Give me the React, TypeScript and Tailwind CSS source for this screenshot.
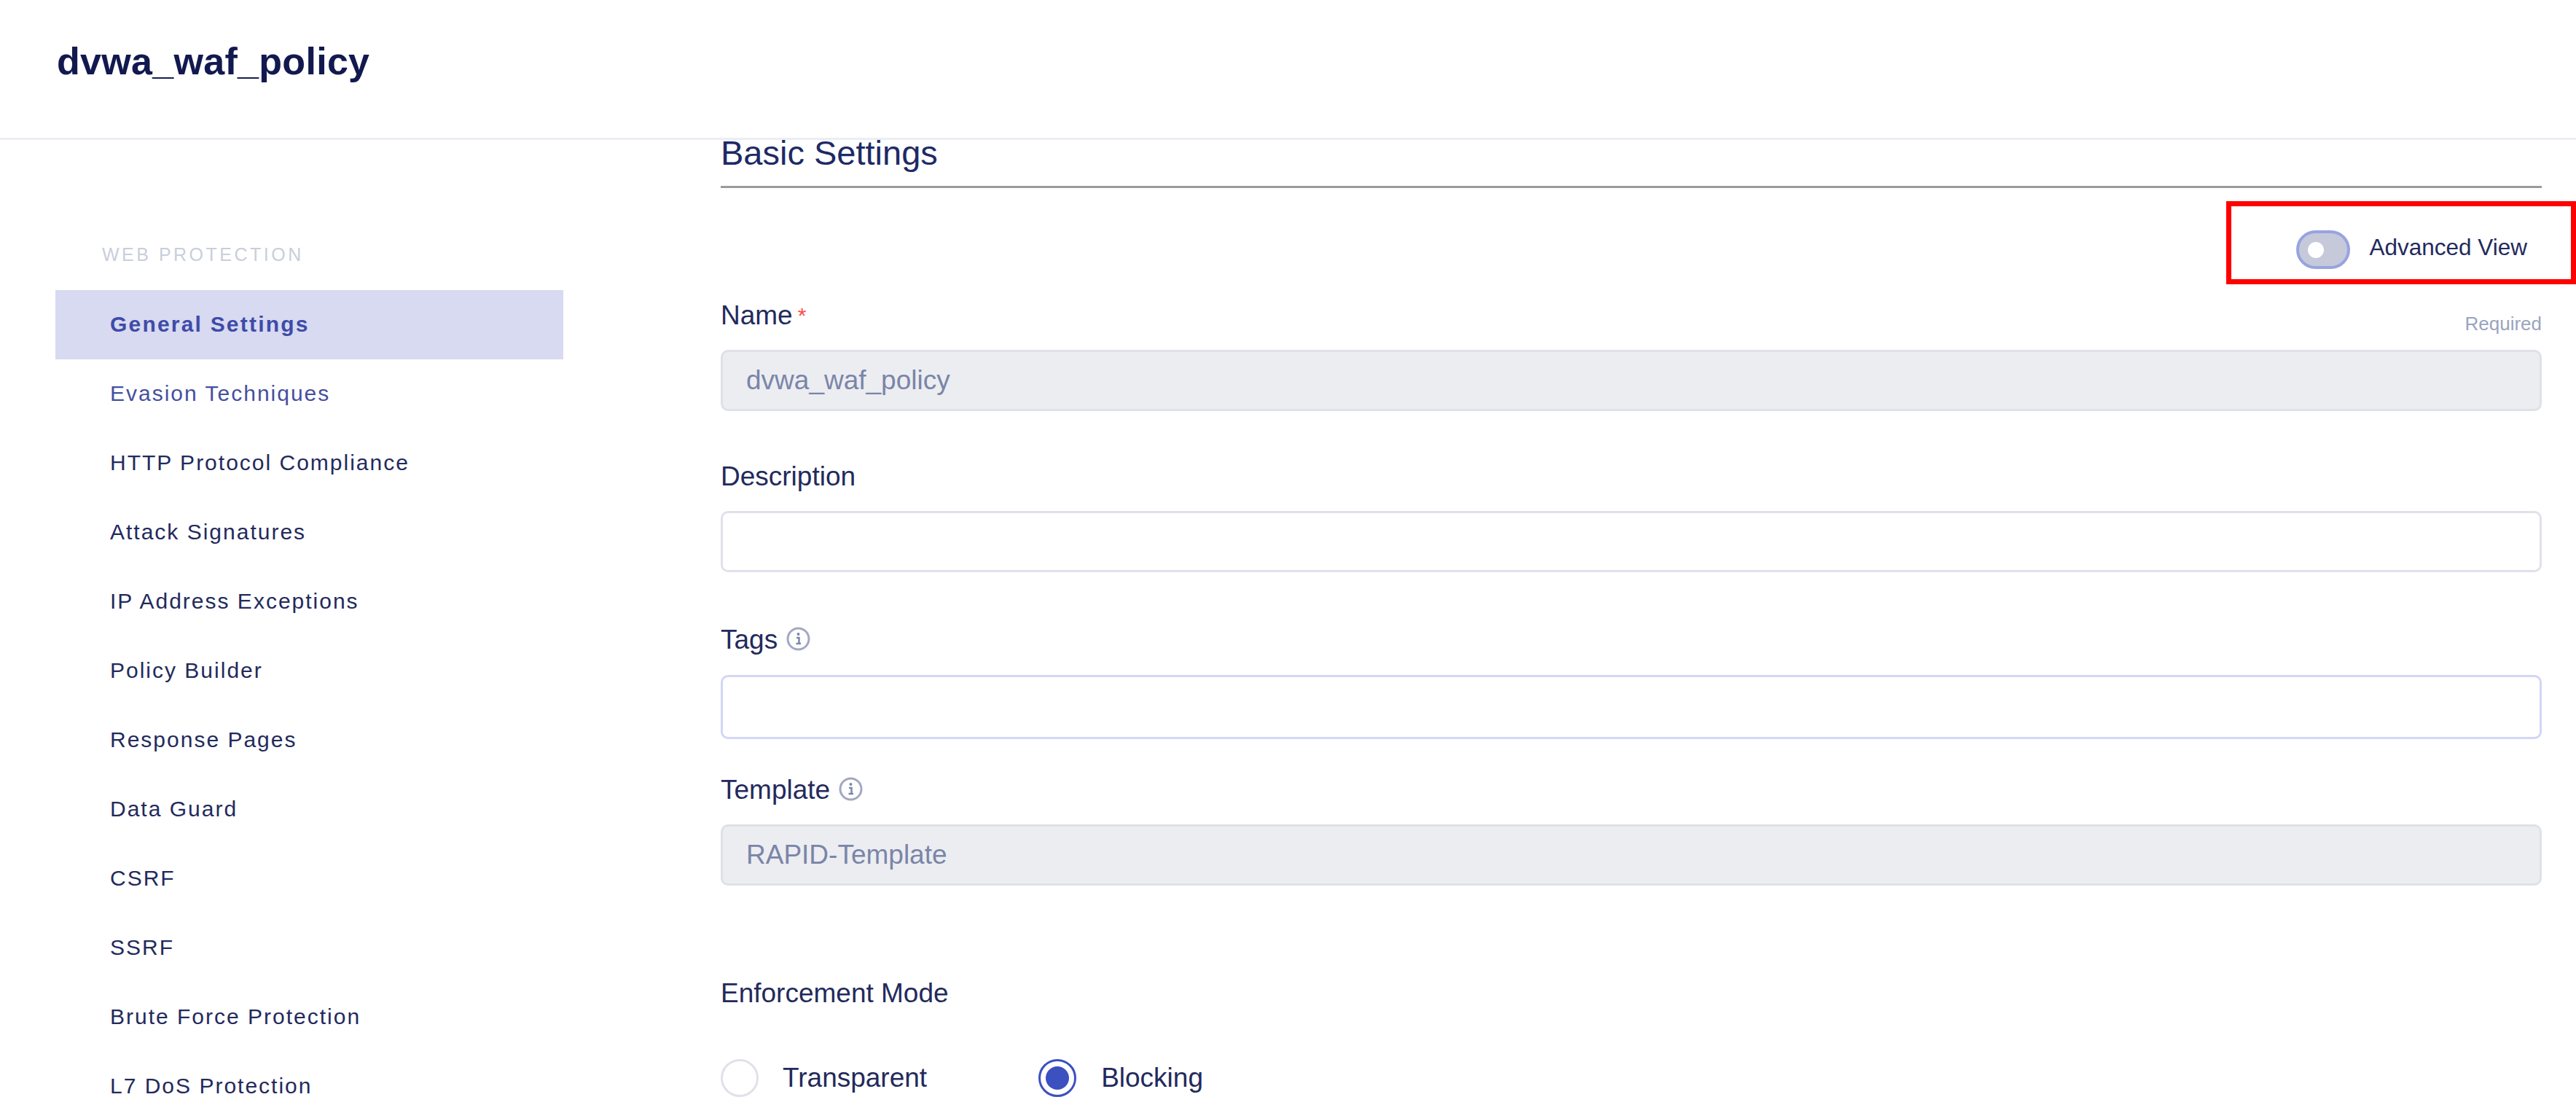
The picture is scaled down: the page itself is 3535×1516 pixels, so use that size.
const navItems = [
  "General Settings",
  "Evasion Techniques",
  "HTTP Protocol Compliance",
  "Attack Signatures",
  "IP Address Exceptions",
  "Policy Builder",
  "Response Pages",
  "Data Guard",
  "CSRF",
  "SSRF",
  "Brute Force Protection",
  "L7 DoS Protection",
];

function navClass(i: number) {
  if (i === 0)
    return "flex h-[95px] items-center bg-[#d7daf1] pb-[2px] pl-[75px] text-[30px] font-bold tracking-[2.2px] text-[#3f4ba8]";
  if (i === 1)
    return "flex h-[95px] items-center pb-[2px] pl-[75px] text-[30px] tracking-[2px] text-[#454f9f]";
  return "flex h-[95px] items-center pb-[2px] pl-[75px] text-[30px] tracking-[2px] text-[#232a5c]";
}

function InfoIcon() {
  return (
    <svg width="33" height="33" viewBox="0 0 33 33" fill="none" className="ml-[12px] mt-[3px] shrink-0">
      <circle cx="16.5" cy="16.5" r="14.5" stroke="#a3a8c2" strokeWidth="3" />
      <circle cx="16.5" cy="10" r="2" fill="#7f86a8" />
      <path d="M14 15h3.5v7.5M13.5 23h6.5" stroke="#7f86a8" strokeWidth="2.5" />
    </svg>
  );
}

function Label({ children }: { children: React.ReactNode }) {
  return <span className="text-[37px] leading-[42px] text-[#232a5c]">{children}</span>;
}

export default function App() {
  return (
    <div className="relative h-[1516px] w-[3535px] overflow-hidden bg-white font-['Liberation_Sans',Arial,sans-serif]">
      <header className="relative z-0 h-[192px] border-b-[3px] border-[#eceef6] pl-[78px] pt-[54px]">
        <h1 className="text-[52px] font-bold leading-[60px] tracking-[0.3px] text-[#12194f]">dvwa_waf_policy</h1>
      </header>

      <div className="flex">
        <aside className="w-[989px] shrink-0 pl-[76px] pt-[142px]">
          <div className="mb-[34px] pl-[64px] text-[25px] leading-[30px] tracking-[3.5px] text-[#c9cedb]">
            WEB PROTECTION
          </div>
          <nav className="w-[697px]">
            {navItems.map((item, i) => (
              <div key={item} className={navClass(i)}>
                {item}
              </div>
            ))}
          </nav>
        </aside>

        <main className="relative z-10 w-[2499px] shrink-0">
          <h2 className="-mt-[9px] border-b-[3px] border-[#9a9a9a] pb-[18px] text-[47px] leading-[54px] text-[#1d2a66]">
            Basic Settings
          </h2>

          <div className="mt-[58px] flex h-[53px] items-center justify-end gap-[26px] pr-[20px]">
            <div className="flex h-[53px] w-[74px] items-center rounded-full border-[4px] border-[#98a3e0] bg-[#c5c9da] pl-[12px]">
              <div className="h-[22px] w-[22px] rounded-full bg-white" />
            </div>
            <span className="mb-[8px] text-[31.5px] leading-[40px] text-[#232a5c]">Advanced View</span>
          </div>

          <div className="mt-[43px] flex h-[68px] items-start justify-between">
            <span className="flex">
              <Label>Name</Label>
              <span className="ml-[7px] mt-[6px] text-[30px] leading-[30px] text-[#ff4b4b]">*</span>
            </span>
            <span className="mt-[17px] text-[26px] leading-[30px] text-[#9aa3c0]">Required</span>
          </div>
          <div className="flex h-[84px] items-center rounded-[10px] border-[3px] border-[#dfe1e8] bg-[#ecedf1] pl-[32px] text-[37px] text-[#7a85a8]">
            dvwa_waf_policy
          </div>

          <div className="mt-[69px] flex h-[68px] items-start">
            <Label>Description</Label>
          </div>
          <div className="h-[84px] rounded-[10px] border-[3px] border-[#e0e1ec] bg-white" />

          <div className="mt-[72px] flex h-[69px] items-start">
            <Label>Tags</Label>
            <InfoIcon />
          </div>
          <div className="h-[88px] rounded-[10px] border-[3px] border-[#d3d6f4] bg-white" />

          <div className="mt-[49px] flex h-[68px] items-start">
            <Label>Template</Label>
            <InfoIcon />
          </div>
          <div className="flex h-[84px] items-center rounded-[10px] border-[3px] border-[#dfe1e8] bg-[#ecedf1] pl-[32px] text-[37px] text-[#7a85a8]">
            RAPID-Template
          </div>

          <div className="mt-[127px]">
            <Label>Enforcement Mode</Label>
          </div>

          <div className="mt-[69px] flex items-center">
            <div className="h-[52px] w-[52px] rounded-full border-[3px] border-[#e0e2ea] bg-white" />
            <span className="ml-[33px] text-[37px] leading-[42px] text-[#232a5c]">Transparent</span>
            <div className="ml-[153px] flex h-[52px] w-[52px] items-center justify-center rounded-full border-[3px] border-[#3c50c0] bg-white">
              <div className="h-[32px] w-[32px] rounded-full bg-[#3c50c0]" />
            </div>
            <span className="ml-[34px] text-[37px] leading-[42px] text-[#232a5c]">Blocking</span>
          </div>
        </main>
      </div>

      <div className="absolute left-[3055px] top-[276px] z-20 h-[114px] w-[480px] border-[7px] border-[#ff0000]" />
    </div>
  );
}
